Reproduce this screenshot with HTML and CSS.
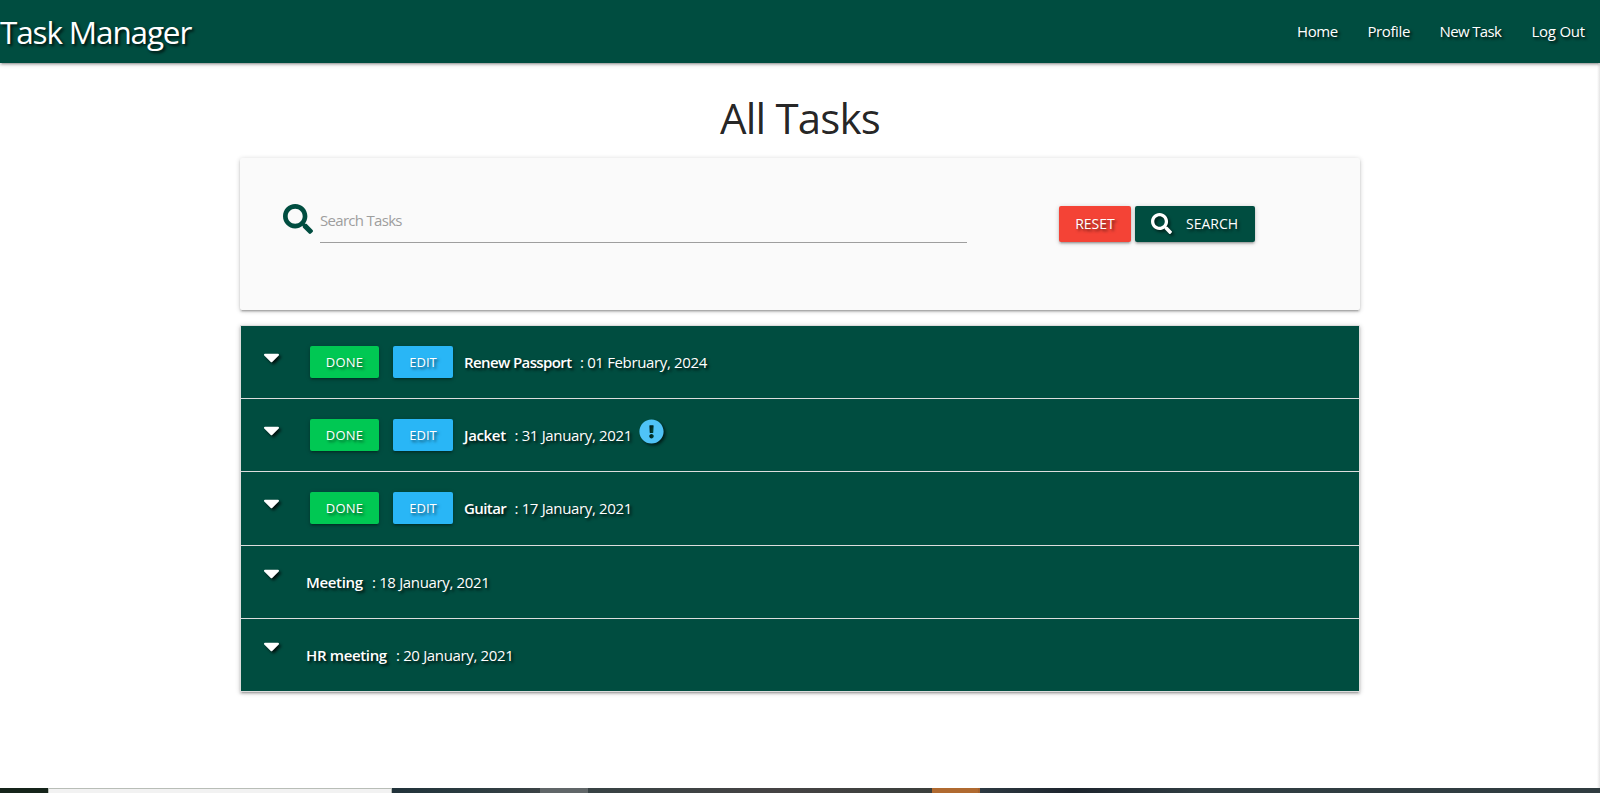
FILE: index.html
```html
<!DOCTYPE html>
<html lang="en">
<head>
<meta charset="utf-8">
<title>Task Manager</title>
<link rel="stylesheet" href="styles.css">
</head>
<body>
<svg class="defs" aria-hidden="true">
  <symbol id="search" viewBox="0 0 512 512"><path d="M505 442.700 405.300 343c-4.500-4.500-10.600-7-17-7H372c27.600-35.300 44-79.700 44-128C416 93.100 322.900 0 208 0S0 93.100 0 208s93.100 208 208 208c48.300 0 92.700-16.400 128-44v16.300c0 6.400 2.500 12.500 7 17l99.700 99.700c9.400 9.400 24.600 9.400 33.900 0l28.300-28.300c9.400-9.400 9.400-24.600.1-34zM208 336c-70.700 0-128-57.200-128-128 0-70.700 57.200-128 128-128 70.700 0 128 57.200 128 128 0 70.700-57.200 128-128 128z"/></symbol>
  <symbol id="caret" viewBox="0 0 320 512"><path d="M31.300 192h257.300c17.800 0 26.700 21.500 14.100 34.100L174.100 354.800c-7.800 7.800-20.500 7.800-28.300 0L17.200 226.100C4.600 213.500 13.500 192 31.300 192z"/></symbol>
  <symbol id="alert" viewBox="0 0 512 512"><path d="M504 256c0 137-111 248-248 248S8 393 8 256C8 119.100 119 8 256 8s248 111.100 248 248zm-248 50c-25.400 0-46 20.600-46 46s20.600 46 46 46 46-20.600 46-46-20.600-46-46-46zm-43.700-165.300l7.400 136c.3 6.400 5.600 11.300 12 11.300h48.500c6.400 0 11.600-5 12-11.300l7.400-136c.4-6.900-5.100-12.700-12-12.700h-63.400c-6.900 0-12.400 5.800-11.900 12.700z"/></symbol>
</svg>
<nav class="navbar">
  <div class="brand">Task Manager</div>
  <ul class="links"><li class="home">Home</li><li class="profile">Profile</li><li class="new">New Task</li><li class="logout">Log Out</li></ul>
</nav>
<main class="container">
  <h1>All Tasks</h1>
  <form class="panel">
    <svg class="panel-icon"><use href="#search"/></svg>
    <input class="query" type="text" placeholder="Search Tasks">
    <div class="actions">
      <button type="button" class="btn reset">RESET</button>
      <button type="button" class="btn submit"><svg><use href="#search"/></svg><span>SEARCH</span></button>
    </div>
  </form>
  <ul class="tasks">
    <li><svg class="caret"><use href="#caret"/></svg><button type="button" class="btn small done">DONE</button><button type="button" class="btn small edit">EDIT</button><strong class="t1">Renew Passport</strong><span class="date">: 01 February, 2024</span></li>
    <li><svg class="caret"><use href="#caret"/></svg><button type="button" class="btn small done">DONE</button><button type="button" class="btn small edit">EDIT</button><strong class="t2">Jacket</strong><span class="date">: 31 January, 2021</span><svg class="alert"><use href="#alert"/></svg></li>
    <li><svg class="caret"><use href="#caret"/></svg><button type="button" class="btn small done">DONE</button><button type="button" class="btn small edit">EDIT</button><strong class="t3">Guitar</strong><span class="date">: 17 January, 2021</span></li>
    <li class="plain"><svg class="caret"><use href="#caret"/></svg><strong class="t4">Meeting</strong><span class="date">: 18 January, 2021</span></li>
    <li class="plain"><svg class="caret"><use href="#caret"/></svg><strong class="t5">HR meeting</strong><span class="date">: 20 January, 2021</span></li>
  </ul>
</main>
<footer class="strip"><i class="s1"></i><i class="s2"></i><i class="s3"></i><i class="s4"></i><i class="s5"></i><i class="s6"></i><i class="s7"></i></footer>
</body>
</html>
```
FILE: styles.css
```css
* { box-sizing: border-box; }
body {
  margin: 0;
  height: 793px;
  overflow: hidden;
  display: flex;
  flex-direction: column;
  background: #fff linear-gradient(to left, #e4e4e4, #fff) right / 3px 100% no-repeat;
  color: rgba(0, 0, 0, .87);
  font: 15px/22px "Segoe UI", "Open Sans", sans-serif;
}
ul { list-style: none; margin: 0; padding: 0; }
svg { fill: currentColor; flex: none; }
.defs { position: absolute; width: 0; height: 0; }
.navbar {
  height: 63px;
  flex: none;
  display: flex;
  justify-content: space-between;
  background: #004d40;
  color: #fff;
  text-shadow: 2px 2px 3px rgba(0, 0, 0, .8);
  box-shadow: 0 2px 2px 0 rgba(0, 0, 0, .14), 0 3px 1px -2px rgba(0, 0, 0, .12), 0 1px 5px 0 rgba(0, 0, 0, .2);
}
.brand { font-size: 31.5px; line-height: 63px; letter-spacing: -1.15px; white-space: nowrap; }
.links { display: flex; line-height: 63px; letter-spacing: -.4px; white-space: nowrap; }
.links li { padding-left: 15px; }
.home { width: 70.500px; }
.profile { width: 72px; }
.new { width: 92px; letter-spacing: -.65px; }
.logout { width: 83.500px; letter-spacing: -.25px; }
.container { width: 1120px; margin: 0 auto; }
h1 {
  margin: 27px 0 0;
  height: 68px;
  font-size: 42px;
  font-weight: 400;
  line-height: 56px;
  text-align: center;
  letter-spacing: -.8px;
}
.panel {
  height: 152px;
  padding: 46px 43px 0;
  display: flex;
  align-items: flex-start;
  background: #fafafa;
  border-radius: 2px;
  box-shadow: 0 2px 2px 0 rgba(0, 0, 0, .14), 0 3px 1px -2px rgba(0, 0, 0, .12), 0 1px 5px 0 rgba(0, 0, 0, .2);
}
.panel-icon { width: 30px; height: 30px; color: #004d40; }
.query {
  width: 647px;
  height: 45px;
  margin: -6px 92px 0 7px;
  padding: 0 0 1px;
  border: 0;
  border-bottom: 1px solid #9e9e9e;
  outline: 0;
  background: none;
  font: inherit;
  letter-spacing: -.7px;
}
.query::placeholder { color: #9e9e9e; opacity: 1; }
.actions { display: flex; gap: 4px; padding-top: 2px; }
.btn {
  height: 36px;
  padding: 0;
  border: 0;
  border-radius: 2px;
  color: #fff;
  font: 14px/34px "Segoe UI", "Open Sans", sans-serif;
  text-align: center;
  text-shadow: 2px 2px 3px rgba(0, 0, 0, .6);
  box-shadow: 0 2px 2px 0 rgba(0, 0, 0, .14), 0 3px 1px -2px rgba(0, 0, 0, .12), 0 1px 5px 0 rgba(0, 0, 0, .2);
}
.reset { width: 72px; background: #f44336; }
.submit { width: 120px; background: #004d40; display: flex; align-items: center; padding-left: 16px; }
.submit svg { width: 21px; height: 21px; margin: -2px 14px 0 0; filter: drop-shadow(2px 2px 1.500px rgba(0, 0, 0, .6)); }
.tasks {
  margin-top: 15px;
  border: 1px solid #ddd;
  border-bottom: 0;
  background: #004d40;
  color: #fff;
  text-shadow: 2px 2px 3px rgba(0, 0, 0, .8);
  box-shadow: 0 2px 2px 0 rgba(0, 0, 0, .14), 0 3px 1px -2px rgba(0, 0, 0, .12), 0 1px 5px 0 rgba(0, 0, 0, .2);
}
.tasks li {
  height: 73.200px;
  display: flex;
  align-items: center;
  border-bottom: 1px solid #ddd;
  white-space: nowrap;
  letter-spacing: -.35px;
}
.caret {
  width: 17px;
  height: 26px;
  margin: -10px 39px 0 22px;
  filter: drop-shadow(2px 2px 1.500px rgba(0, 0, 0, .8));
}
.plain .caret { margin: -18px 26px 0 22px; }
.small { height: 32px; font-size: 13px; line-height: 30px; }
.done { width: 69px; margin-right: 14px; margin-left: -9px; background: #00c853; letter-spacing: .2px; }
.edit { width: 60px; margin-right: 11px; background: #29b6f6; }
.tasks strong { font-weight: 600; flex: none; }
.tasks .t1 { width: 116px; letter-spacing: -.6px; }
.t2, .t3 { width: 50.500px; }
.tasks .t3 { letter-spacing: -.6px; }
.t4 { width: 66px; }
.t5 { width: 90px; }
.alert { width: 25px; height: 25px; margin: -7px 0 0 7px; color: #4fc3f7; filter: drop-shadow(2px 2px 1.500px rgba(0, 0, 0, .6)); }
.strip { display: flex; height: 5px; margin-top: auto; flex: none; }
.strip i { flex: none; }
.s1 { width: 48px; background: #15241a; }
.s2 { width: 344px; background: #f2f2f2; border: 1px solid #b8bdb7; border-bottom: 0; }
.s3 { width: 148px; background: linear-gradient(to right, #21323a, #2a3b40, #3a4245); }
.s4 { width: 48px; background: #606668; }
.s5 { width: 344px; background: linear-gradient(to right, #374244, #454344 55%, #3b3f3c); }
.s6 { width: 48px; background: #b06a30; border-right: 2px solid #a5622d; }
.s7 { width: 620px; background: linear-gradient(to right, #2d3941, #1c242d 15%, #303d42 35%, #303c40); }
```
